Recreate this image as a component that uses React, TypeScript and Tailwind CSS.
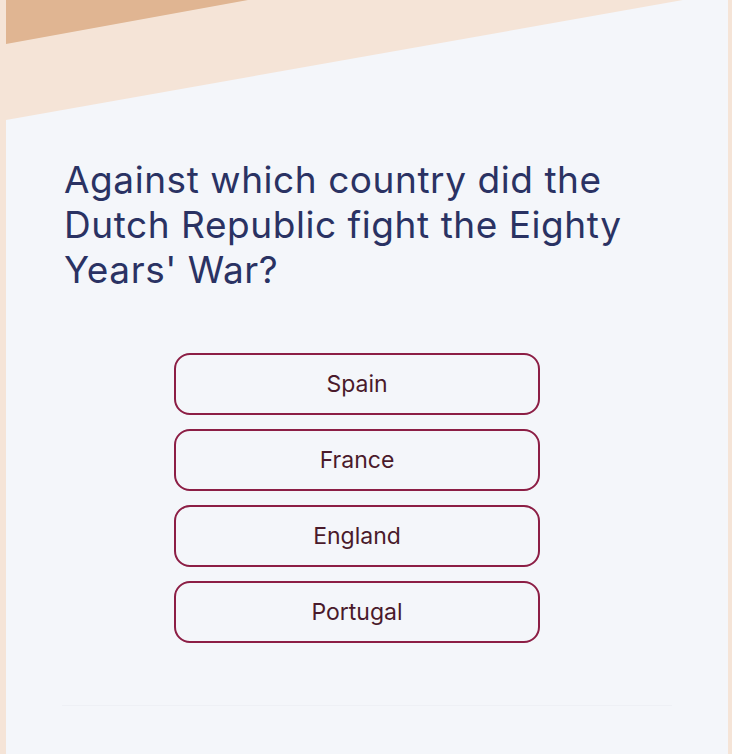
import React from "react";

const options = ["Spain", "France", "England", "Portugal"];

export default function App() {
  return (
    <div className="min-h-screen bg-[#f5e4d7] pl-[6px] pr-[4px] font-['Inter',sans-serif]">
      <div className="relative h-[754px]">
        {/* decorative darker band in the top-left corner */}
        <div className="absolute left-0 top-0 h-[44px] w-[242px] bg-[#e0b592] [clip-path:polygon(0_0,100%_0,0_100%)]"></div>
        <div className="flex h-full flex-col bg-[#f4f6fa] px-[56px] pt-[157px] [clip-path:polygon(0_120px,100%_-8px,100%_100%,0_100%)]">
          <h1 className="pl-[2px] text-[37px] font-normal leading-[45px] tracking-[0.015em] text-[#2a3263]">
            Against which country did the Dutch Republic fight the Eighty Years' War?
          </h1>
          <div className="mt-[61px] ml-[112px] flex w-[366px] flex-col gap-[14px]">
            {options.map((o) => (
              <button
                key={o}
                className="h-[62px] rounded-[16px] border-2 border-[#8c1e45] text-[23px] text-[#4a1a2b]"
              >
                {o}
              </button>
            ))}
          </div>
          <div className="mt-[62px] h-px w-[610px] bg-[#eef0f5]"></div>
        </div>
      </div>
    </div>
  );
}
